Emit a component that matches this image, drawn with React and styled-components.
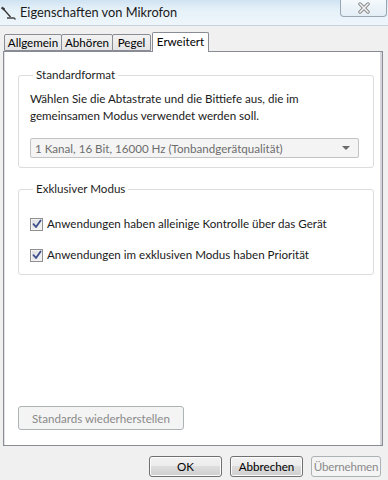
import React from "react";
import styled, { createGlobalStyle } from "styled-components";

const Global = createGlobalStyle`
  html, body {
    margin: 0;
    padding: 0;
    background: #f0f0f0;
  }
  * { box-sizing: border-box; }
`;

const Window = styled.div`
  width: 388px;
  height: 480px;
  display: flex;
  flex-direction: column;
  background: #f0f0f0;
  font-family: Lato, "Noto Sans", sans-serif;
  font-size: 11.6px;
  color: #000;
  overflow: hidden;
`;

const TitleBar = styled.div`
  height: 26px;
  display: flex;
  align-items: flex-start;
  background: linear-gradient(180deg, #cfe3f2 0%, #e4f0f8 35%, #eef6fb 100%);
  border-bottom: 1px solid #c6d3dd;
`;

const TitleIcon = styled.svg`
  width: 16px;
  height: 16px;
  margin: 5px 3px 0 1px;
  flex: none;
`;

const TitleText = styled.div`
  margin-top: 4px;
  font-size: 12.8px;
  color: #1a1a1a;
`;

const CloseButton = styled.div`
  margin-left: auto;
  margin-right: 1px;
  width: 47px;
  height: 17px;
  border: 1px solid #9aa7b3;
  border-top: none;
  border-radius: 0 0 4px 4px;
  background: linear-gradient(180deg, #f4f9fc 0%, #e3eef5 100%);
  display: flex;
  align-items: center;
  justify-content: center;
`;

const TabStrip = styled.div`
  display: flex;
  align-items: flex-end;
  padding: 6px 0 0 4px;
  position: relative;
  z-index: 1;
`;

const Tab = styled.div`
  width: ${(p) => p.w};
  height: ${(p) => (p.active ? "20px" : "17px")};
  padding-top: ${(p) => (p.active ? "1px" : "0")};
  margin-bottom: ${(p) => (p.active ? "-1px" : "0")};
  margin-left: ${(p) => (p.active ? "1px" : "-1px")};
  border: 1px solid #898c95;
  border-bottom: ${(p) => (p.active ? "none" : "1px solid #898c95")};
  background: ${(p) =>
    p.active ? "#fff" : "linear-gradient(180deg, #f2f2f2 0%, #e5e5e5 100%)"};
  border-radius: 2px 2px 0 0;
  display: flex;
  justify-content: center;
  align-items: ${(p) => (p.active ? "flex-start" : "center")};
  line-height: 16px;
  &:first-child { margin-left: 0; }
`;

const Panel = styled.div`
  margin: 0 5px 0 3px;
  height: 395px;
  background: #fff;
  border: 1px solid #898c95;
  box-shadow: inset 1px 0 0 #e3e3e3, inset -2px 0 0 #d6d6dc;
  display: flex;
  flex-direction: column;
  padding: 16px 8px 0 14px;
  gap: 14px;
`;

const Group = styled.fieldset`
  margin: 0;
  border: 1px solid #dcdcdc;
  border-radius: 3px;
  padding: 0 14px 12px 11px;
  min-width: 0;
  height: ${(p) => p.h};
`;

const Legend = styled.legend`
  padding: 0 3px 0 3px;
  margin-left: 3px;
  line-height: 14px;
  color: #1e1e1e;
`;

const Description = styled.p`
  margin: 8px 0 0 0;
  line-height: 17px;
  color: #1a1a1a;
`;

const Combo = styled.div`
  margin-top: 14px;
  height: 20px;
  border: 1px solid #c3c3c3;
  border-radius: 2px;
  background: #f4f4f4;
  display: flex;
  align-items: center;
  padding: 0 8px 0 4px;
  color: #6d6d6d;
`;

const ComboText = styled.span`
  flex: 1;
`;

const Arrow = styled.span`
  width: 0;
  height: 0;
  border-left: 4px solid transparent;
  border-right: 4px solid transparent;
  border-top: 4px solid #6a6a6a;
`;

const CheckRow = styled.label`
  display: flex;
  align-items: center;
  gap: 4px;
  margin-top: ${(p) => p.top};
  line-height: 16px;
  color: #1a1a1a;
`;

const Box = styled.span`
  width: 13px;
  height: 13px;
  border: 1px solid #8f8f8f;
  background: linear-gradient(135deg, #dcdcdc 0%, #f6f6f6 100%);
  box-shadow: inset 0 0 0 1px #f4f4f4;
  display: flex;
  align-items: center;
  justify-content: center;
  flex: none;
`;

const Spacer = styled.div`
  flex: 1;
`;

const Button = styled.div`
  width: ${(p) => p.w};
  height: ${(p) => p.h || "23px"};
  border: 1px solid ${(p) => (p.disabled ? "#adb2b5" : "#707070")};
  border-radius: 3px;
  background: ${(p) =>
    p.disabled
      ? "#f4f4f4"
      : "linear-gradient(180deg, #f2f2f2 0%, #ebebeb 49%, #dddddd 50%, #cfcfcf 100%)"};
  box-shadow: ${(p) => (p.disabled ? "none" : "inset 0 0 0 1px #fcfcfc")};
  color: ${(p) => (p.disabled ? "#8a8a8a" : "#000")};
  display: flex;
  align-items: center;
  justify-content: center;
  letter-spacing: ${(p) => p.ls || "0"};
`;

const ResetButton = styled(Button)`
  margin-bottom: 15px;
`;

const Footer = styled.div`
  display: flex;
  justify-content: flex-end;
  gap: 8px;
  padding: 10px 7px 0 0;
`;

function MicIcon() {
  return (
    <TitleIcon viewBox="0 0 16 16">
      <path d="M0.5 2.5 L3.5 4.5" stroke="#444" strokeWidth="2.2" fill="none" />
      <path d="M2 3.5 L9.5 12" stroke="#333" strokeWidth="1.3" fill="none" />
      <path d="M6 13 L13 13 L14.5 14.5" stroke="#444" strokeWidth="1.3" fill="none" />
    </TitleIcon>
  );
}

function Check() {
  return (
    <svg width="10" height="10" viewBox="0 0 10 10">
      <path
        d="M1.5 5.2 L4 8 L8.6 1.4"
        stroke="#3a4f8c"
        strokeWidth="1.8"
        fill="none"
        strokeLinecap="round"
        strokeLinejoin="round"
      />
    </svg>
  );
}

export default function App() {
  return (
    <Window>
      <Global />
      <TitleBar>
        <MicIcon />
        <TitleText>Eigenschaften von Mikrofon</TitleText>
        <CloseButton>
          <svg width="16" height="12" viewBox="0 0 16 12">
            <path
              d="M4 2 L12 10 M12 2 L4 10"
              stroke="#8a8a8a"
              strokeWidth="3.4"
              strokeLinecap="round"
            />
            <path
              d="M4 2 L12 10 M12 2 L4 10"
              stroke="#f4f4f4"
              strokeWidth="1.5"
              strokeLinecap="round"
            />
          </svg>
        </CloseButton>
      </TitleBar>
      <TabStrip>
        <Tab w="58px">Allgemein</Tab>
        <Tab w="52px">Abhören</Tab>
        <Tab w="39px">Pegel</Tab>
        <Tab w="57px" active>Erweitert</Tab>
      </TabStrip>
      <Panel>
        <Group h="100px">
          <Legend>Standardformat</Legend>
          <Description>
            Wählen Sie die Abtastrate und die Bittiefe aus, die im
            <br />
            gemeinsamen Modus verwendet werden soll.
          </Description>
          <Combo>
            <ComboText>1 Kanal, 16 Bit, 16000 Hz (Tonbandgerätqualität)</ComboText>
            <Arrow />
          </Combo>
        </Group>
        <Group h="93px">
          <Legend>Exklusiver Modus</Legend>
          <CheckRow top="20px">
            <Box>
              <Check />
            </Box>
            Anwendungen haben alleinige Kontrolle über das Gerät
          </CheckRow>
          <CheckRow top="15px">
            <Box>
              <Check />
            </Box>
            Anwendungen im exklusiven Modus haben Priorität
          </CheckRow>
        </Group>
        <Spacer />
        <ResetButton w="166px" h="24px" disabled>
          Standards wiederherstellen
        </ResetButton>
      </Panel>
      <Footer>
        <Button w="73px" h="21px">OK</Button>
        <Button w="73px" h="21px">Abbrechen</Button>
        <Button w="70px" h="21px" ls="-0.2px" disabled>Übernehmen</Button>
      </Footer>
    </Window>
  );
}
